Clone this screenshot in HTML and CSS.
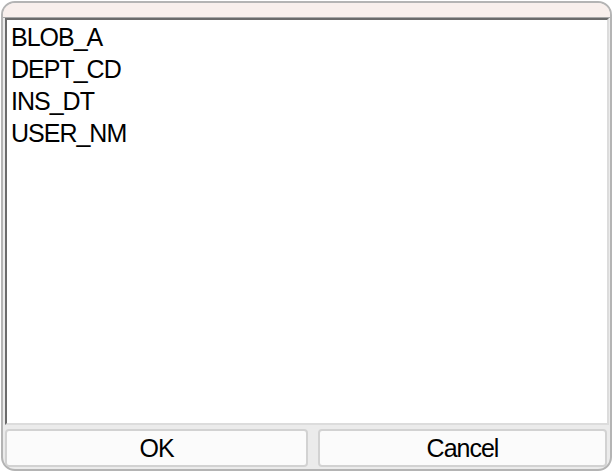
FILE: index.html
```html
<!DOCTYPE html>
<html>
<head>
<meta charset="utf-8">
<link rel="stylesheet" href="styles.css">
</head>
<body>
<div class="window">
  <div class="titlebar"></div>
  <div class="listbox">
    <div class="item">BLOB_A</div>
    <div class="item">DEPT_CD</div>
    <div class="item">INS_DT</div>
    <div class="item">USER_NM</div>
  </div>
  <div class="buttons">
    <button class="btn">OK</button>
    <button class="btn">Cancel</button>
  </div>
</div>
</body>
</html>
```
FILE: styles.css
```css
html, body {
  margin: 0;
  padding: 0;
  background: #ffffff;
}
body {
  padding: 1px;
  width: 613px;
  height: 472px;
  box-sizing: border-box;
}
.window {
  box-sizing: border-box;
  width: 611px;
  height: 470px;
  border: 2px solid #b4b4b4;
  border-radius: 14px;
  background: #ebebeb;
  overflow: hidden;
  display: flex;
  flex-direction: column;
  font-family: "Liberation Sans", Arial, sans-serif;
}
.titlebar {
  height: 14px;
  background: #f8efec;
  border-bottom: 1px solid #a8a8a8;
  flex: none;
}
.listbox {
  flex: 1;
  margin: 0 1px 0 2px;
  background: #ffffff;
  border-style: solid;
  border-width: 2px;
  border-color: #6b6b6b #dcdcdc #dcdcdc #6b6b6b;
  padding: 1px 4px 0;
}
.item {
  font-size: 25px;
  line-height: 32px;
  letter-spacing: -1px;
  color: #000;
}
.buttons {
  flex: none;
  display: flex;
  gap: 10px;
  padding: 4px 3px 2px 2px;
}
.btn {
  box-sizing: border-box;
  height: 38px;
  border: 2px solid #d2d2d2;
  border-radius: 4px;
  background: #fbfbfb;
  font-family: "Liberation Sans", Arial, sans-serif;
  font-size: 25px;
  letter-spacing: -1px;
  color: #000;
  padding: 0;
}
.btn:first-child {
  width: 303px;
}
.btn:last-child {
  flex: 1;
}
```
